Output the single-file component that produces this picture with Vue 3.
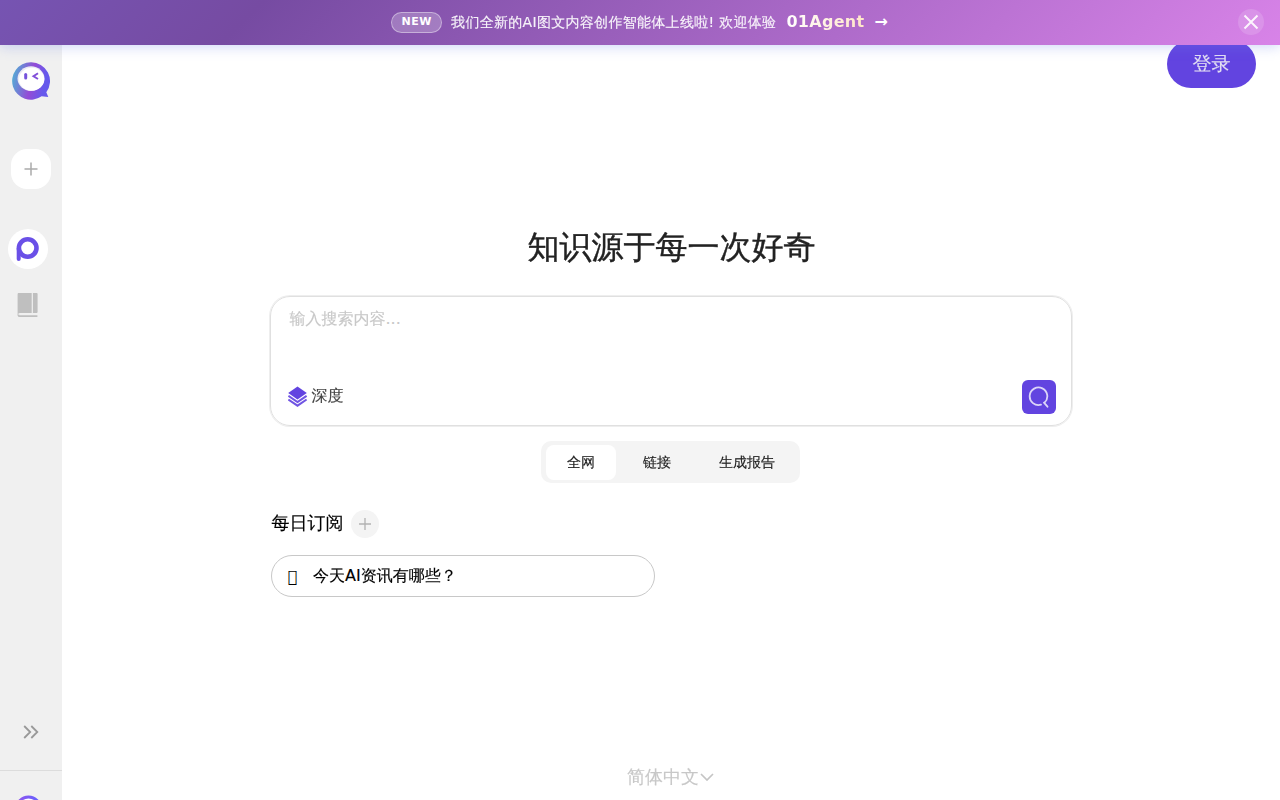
<template>
  <div class="page">
    <header class="banner">
      <span class="badge">NEW</span>
      <span class="banner-text">我们全新的AI图文内容创作智能体上线啦! 欢迎体验</span>
      <span class="agent">01Agent</span>
      <span class="arrow">→</span>
      <button class="close" aria-label="close">
        <svg width="26" height="26" viewBox="0 0 26 26" fill="none" stroke="#fff" stroke-opacity=".9" stroke-width="2">
          <path d="M6.5 6.5l13 13M19.5 6.5l-13 13" />
        </svg>
      </button>
    </header>

    <div class="body">
      <aside class="sidebar">
        <svg class="logo" width="40" height="40" viewBox="0 0 40 40">
          <defs>
            <linearGradient id="ring" x1="0" y1=".4" x2="1" y2=".6">
              <stop offset="0" stop-color="#55aad5" />
              <stop offset=".5" stop-color="#944bd6" />
              <stop offset=".85" stop-color="#6659ec" />
            </linearGradient>
          </defs>
          <path d="M19.8 1.3a18.7 18.7 0 1 0 10.8 34l6.7.6-2-4.7A18.7 18.7 0 0 0 19.8 1.3z" fill="url(#ring)" />
          <ellipse cx="20" cy="17.6" rx="13.5" ry="12.3" fill="#ecebf4" />
          <ellipse cx="20.6" cy="18.2" rx="12.6" ry="11.4" fill="#fff" />
          <path d="M14.7 13.4v3.6" stroke="#7653dc" stroke-width="3" stroke-linecap="round" />
          <path d="M27 12.2l-4.5 3.1 4.5 2.7" stroke="#8250d9" stroke-width="2" fill="none" />
        </svg>
        <button class="new-chat">
          <svg width="14" height="14" viewBox="0 0 14 14" stroke="#aaa" stroke-width="1.5"><path d="M7 .5v13M.5 7h13" /></svg>
        </button>
        <button class="nav active">
          <svg width="24" height="26" viewBox="0 0 24 26">
            <path d="M2.7 23V12.5" stroke="#6a50e7" stroke-width="4" stroke-linecap="round" />
            <circle cx="11.7" cy="12" r="8.8" fill="none" stroke="#6a50e7" stroke-width="4.6" />
          </svg>
        </button>
        <button class="nav book">
          <svg width="22" height="26" viewBox="0 0 22 26" fill="#bfbfbf">
            <path d="M1.8 1h12.9v20H3a2 2 0 0 0-1.5.5L.6 23V2.3C.6 1.5 1 1 1.8 1z" />
            <path d="M15.9 1h3.5c.8 0 1.2.5 1.2 1.2v17.6c0 .8-.5 1.2-1.2 1.2h-3.5z" />
            <path d="M20.4 24.2H3a1.7 1.7 0 0 1-1.7-1.7" fill="none" stroke="#bfbfbf" stroke-width="1.7" />
          </svg>
        </button>
        <div class="expand">
          <svg width="16" height="14" viewBox="0 0 16 14" fill="none" stroke="#999" stroke-width="1.8">
            <path d="M1.2 1l6 6-6 6M8.3 1l6 6-6 6" />
          </svg>
        </div>
        <div class="user">
          <svg width="28" height="28" viewBox="0 0 28 28">
            <defs>
              <linearGradient id="user-ring"><stop stop-color="#9255ed" /><stop offset="1" stop-color="#6262ff" /></linearGradient>
            </defs>
            <circle cx="14.5" cy="14" r="12" fill="#fff" stroke="url(#user-ring)" stroke-width="3" />
          </svg>
        </div>
      </aside>

      <main class="main">
        <div class="top"><button class="login">登录</button></div>
        <section class="content">
          <h1 class="title">知识源于每一次好奇</h1>
          <div class="search">
            <textarea v-model="keyword" placeholder="输入搜索内容..."></textarea>
            <div class="search-bar">
              <div class="deep">
                <svg width="20" height="22" viewBox="0 0 20 22">
                  <path d="M9.5.5l9.3 6.500-9.300 6.500L.2 7z" fill="#6244e0" />
                  <path d="M.4 9.800l9.100 6.200 9.100-6.200M.4 13.500l9.100 6.200 9.100-6.200" fill="none" stroke="#7055e3" stroke-width="2" />
                </svg>
                <span>深度</span>
              </div>
              <button class="search-btn">
                <svg width="22" height="22" viewBox="0 0 22 22" fill="none" stroke="#dcd5f8" stroke-width="1.8" stroke-linecap="round">
                  <path d="M13 18.7A8.8 8.8 0 1 1 16.5 16.7" />
                  <path d="M16 16.7l3.500 4" />
                </svg>
              </button>
            </div>
          </div>
          <div class="tabs">
            <button
              v-for="tab in tabs"
              :key="tab"
              class="tab"
              :class="{ active: tab === current }"
              @click="current = tab"
            >{{ tab }}</button>
          </div>
          <div class="daily">
            <span>每日订阅</span>
            <button class="add">
              <svg width="12" height="12" viewBox="0 0 12 12" stroke="#b2b2b2" stroke-width="1.3"><path d="M6 0v12M0 6h12" /></svg>
            </button>
          </div>
          <div class="question">
            <span class="emoji">&#xE001;</span>
            <span>今天AI资讯有哪些？</span>
          </div>
        </section>
        <footer class="lang">
          <span>简体中文</span>
          <svg width="14" height="8" viewBox="0 0 14 8" fill="none" stroke="#c5c5c5" stroke-width="1.7"><path d="M1 1l6 6 6-6" /></svg>
        </footer>
      </main>
    </div>
  </div>
</template>

<script setup>
import { ref } from 'vue'

const keyword = ref('')
const tabs = ['全网', '链接', '生成报告']
const current = ref('全网')
</script>

<style>
body {
  overflow: hidden;
}
</style>

<style scoped>
.page {
  height: 800px;
  display: flex;
  flex-direction: column;
  overflow: hidden;
  background: #fff;
  font-family: "DejaVu Sans", "WenQuanYi Zen Hei", "Noto Sans CJK SC", sans-serif;
  -webkit-text-stroke: 0.15px;
}

button {
  border: none;
  padding: 0;
  font-family: inherit;
  display: flex;
  align-items: center;
  justify-content: center;
  cursor: pointer;
}

svg { display: block; flex: none; }

.banner {
  position: relative;
  z-index: 2;
  height: 45px;
  flex: none;
  display: flex;
  align-items: center;
  justify-content: center;
  box-sizing: border-box;
  color: #fff;
  background: linear-gradient(135deg, #7654b2 0%, #764ba2 20%, #d883e8 100%);
  box-shadow: 0 2px 12px rgba(102, 126, 234, 0.3);
}

.badge {
  height: 21px;
  width: 51px;
  box-sizing: border-box;
  border: 1px solid rgba(255, 255, 255, 0.4);
  border-radius: 12px;
  background: rgba(255, 255, 255, 0.23);
  font-size: 11px;
  font-weight: 700;
  letter-spacing: 0.5px;
  line-height: 18px;
  text-align: center;
  margin-right: 9px;
  -webkit-text-stroke: 0;
}

.banner-text {
  font-size: 14px;
  letter-spacing: 0.3px;
  opacity: 0.92;
  margin-right: 10px;
}

.agent {
  font-size: 16px;
  font-weight: 700;
  letter-spacing: 0.3px;
  margin-right: 10px;
  padding-bottom: 2px;
  color: transparent;
  background: linear-gradient(90deg, #fff, #ffe6c8);
  background-clip: text;
  -webkit-text-stroke: 0;
}

.arrow { font-size: 16px; font-weight: 700; letter-spacing: 1px; padding-bottom: 2px; -webkit-text-stroke: 0; }

.close {
  position: absolute;
  right: 16px;
  top: 9px;
  width: 26px;
  height: 26px;
  border-radius: 50%;
  background: rgba(255, 255, 255, 0.15);
}

.body { flex: 1; display: flex; min-height: 0; }

.sidebar {
  width: 62px;
  flex: none;
  background: #f0f0f0;
  display: flex;
  flex-direction: column;
  align-items: center;
}

.logo { margin-top: 16px; }

.new-chat {
  width: 40px;
  height: 40px;
  margin-top: 48px;
  border-radius: 16px;
  background: #fff;
}

.nav {
  width: 40px;
  height: 40px;
  margin-right: 6px;
  border-radius: 50%;
  background: transparent;
}

.nav.active { margin-top: 40px; background: #fff; }
.nav.book { margin-top: 16px; }

.expand { margin-top: auto; padding-bottom: 31px; }

.user {
  width: 100%;
  height: 30px;
  flex: none;
  box-sizing: border-box;
  padding: 24px 0 0 14px;
  border-top: 1px solid #dcdcdc;
  overflow: hidden;
}

.main {
  flex: 1;
  display: flex;
  flex-direction: column;
  align-items: center;
}

.top {
  width: 100%;
  height: 43px;
  display: flex;
  justify-content: flex-end;
}

.login {
  width: 89px;
  height: 48px;
  margin: -5px 24px 0 0;
  border-radius: 24px;
  background: #6244e0;
  color: #e2dff2;
  font-size: 19px;
}

.content { width: 802px; margin-top: 137px; padding-right: 1px; }

.title {
  margin: 0;
  padding-left: 2px;
  height: 46px;
  line-height: 44px;
  text-align: center;
  font-size: 32px;
  font-weight: 400;
  color: #222;
  -webkit-text-stroke: 0.4px;
}

.search {
  height: 130px;
  margin-top: 25px;
  box-sizing: border-box;
  border: 1px solid #e0e0e0;
  border-radius: 20px;
  box-shadow: 0 0 0 1px #eee;
  padding: 10px 15px 11px 16px;
  display: flex;
  flex-direction: column;
  justify-content: space-between;
}

textarea {
  height: 46px;
  border: none;
  outline: none;
  padding: 0 2px 0 3px;
  resize: none;
  font-family: inherit;
  font-size: 16px;
  line-height: 24px;
}

textarea::placeholder { color: #c8c8c8; }

.search-bar {
  display: flex;
  justify-content: space-between;
  align-items: center;
}

.deep {
  display: flex;
  align-items: center;
  gap: 4px;
  font-size: 16px;
  color: #444;
}

.deep svg { margin-left: 1px; }
.deep span { margin-top: -2px; }

.search-btn {
  width: 34px;
  height: 34px;
  border-radius: 6px;
  background: #6244e0;
}

.tabs {
  width: 259px;
  height: 42px;
  margin: 15px auto 0;
  box-sizing: border-box;
  padding: 4px 4px 3px 5px;
  border-radius: 10px;
  background: #f4f4f4;
  display: flex;
}

.tab {
  padding: 1px 21px 0;
  margin-right: 6px;
  border-radius: 8px;
  background: transparent;
  font-size: 14px;
  color: #222;
  white-space: nowrap;
}

.tab.active { background: #fff; }
.tab:last-child { margin-right: 0; }

.daily {
  display: flex;
  align-items: center;
  gap: 7px;
  height: 28px;
  margin: 27px 0 0 2px;
  font-size: 18px;
  color: #000;
}

.daily span { padding-bottom: 2px; }

.add {
  width: 28px;
  height: 28px;
  border-radius: 50%;
  background: #f4f4f4;
}

.question {
  width: 384px;
  height: 42px;
  margin: 17px 0 0 1px;
  box-sizing: border-box;
  border: 1px solid #c8c8c8;
  border-radius: 21px;
  padding: 1px 0 0 16px;
  display: flex;
  align-items: center;
  gap: 16px;
  font-size: 16px;
  color: #000;
}

.emoji { padding-bottom: 1px; -webkit-text-stroke: 0; }

.lang {
  margin: auto 1px 11px 0;
  display: flex;
  align-items: center;
  gap: 1px;
  font-size: 18px;
  color: #c8c8c8;
}
</style>
